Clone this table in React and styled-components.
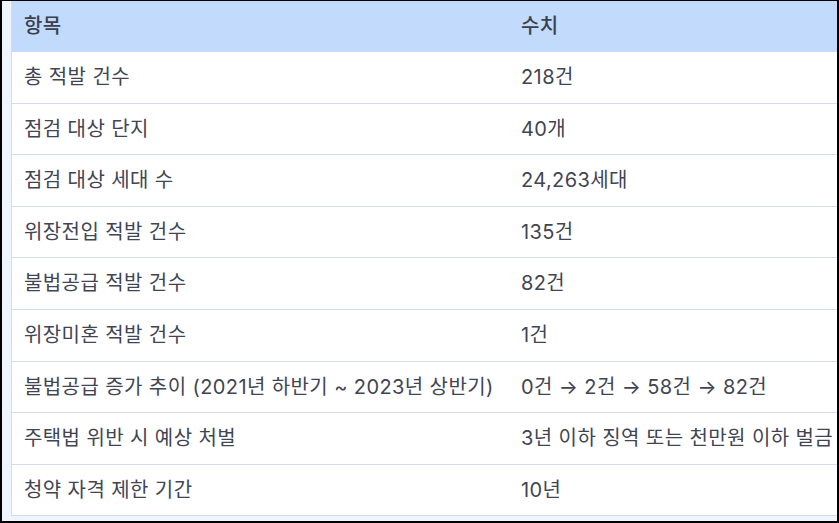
import React from 'react';
import styled, { createGlobalStyle } from 'styled-components';

const GlobalStyle = createGlobalStyle`
  html, body {
    margin: 0;
    padding: 0;
    background: #ffffff;
  }
  body {
    font-family: Inter, "Noto Sans CJK KR", "Noto Sans", sans-serif;
  }
`;

const Frame = styled.div`
  box-sizing: border-box;
  width: 839px;
  height: 523px;
  border-style: solid;
  border-color: #000000;
  border-width: 1px 2px 2px 2px;
  background: #eff5ff;
  padding-left: 9px;
  overflow: hidden;
`;

const Table = styled.table`
  border-collapse: collapse;
  table-layout: fixed;
  width: 900px;
  background: #ffffff;
  border-left: 1px solid #d3dcec;
  color: #3f4553;
  font-size: 20px;
  letter-spacing: 0.4px;
`;

const HeadCell = styled.th`
  background: #c2dafb;
  text-align: left;
  font-weight: 500;
  padding: 12px 12px;
  line-height: 27px;
  color: #3a404e;
  width: ${(p) => (p.$width ? `${p.$width}px` : 'auto')};
`;

const Cell = styled.td`
  padding: 12px 12px;
  line-height: 26.6px;
  border-bottom: 1px solid #d3dcec;
  white-space: nowrap;
`;

const rows = [
  ['총 적발 건수', '218건'],
  ['점검 대상 단지', '40개'],
  ['점검 대상 세대 수', '24,263세대'],
  ['위장전입 적발 건수', '135건'],
  ['불법공급 적발 건수', '82건'],
  ['위장미혼 적발 건수', '1건'],
  ['불법공급 증가 추이 (2021년 하반기 ~ 2023년 상반기)', '0건 → 2건 → 58건 → 82건'],
  ['주택법 위반 시 예상 처벌', '3년 이하 징역 또는 천만원 이하 벌금'],
  ['청약 자격 제한 기간', '10년'],
];

export default function App() {
  return (
    <>
      <GlobalStyle />
      <Frame>
        <Table>
          <thead>
            <tr>
              <HeadCell $width={473}>항목</HeadCell>
              <HeadCell>수치</HeadCell>
            </tr>
          </thead>
          <tbody>
            {rows.map(([label, value]) => (
              <tr key={label}>
                <Cell>{label}</Cell>
                <Cell>{value}</Cell>
              </tr>
            ))}
          </tbody>
        </Table>
      </Frame>
    </>
  );
}
